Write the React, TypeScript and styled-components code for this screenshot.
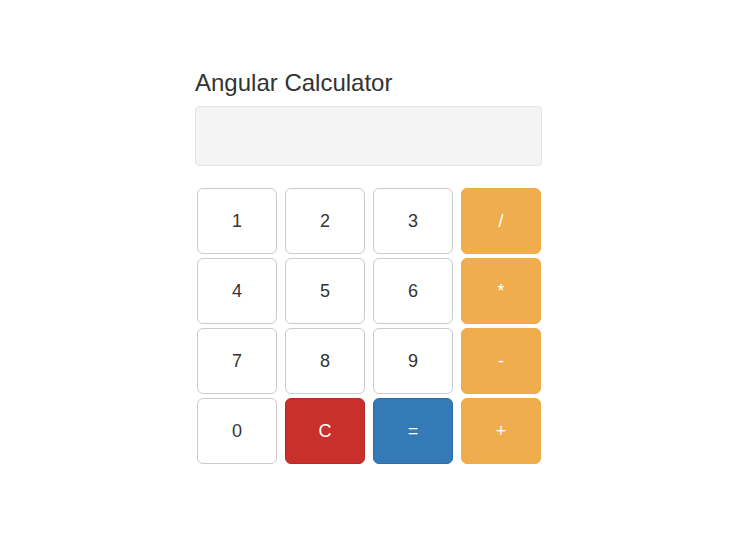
import React from "react";
import styled, { createGlobalStyle } from "styled-components";

const Global = createGlobalStyle`
  html, body { margin: 0; padding: 0; background: #fff; }
  body { font-family: "Liberation Sans", Arial, sans-serif; color: #333; }
`;

const Page = styled.div`
  padding: 70px 0 0 195px;
`;

const Calculator = styled.div`
  width: 347px;
  display: flex;
  flex-direction: column;
`;

const Title = styled.h3`
  margin: 0 0 10px;
  font-size: 24px;
  font-weight: 500;
  line-height: 1.1;
  color: #333;
`;

const Display = styled.div`
  height: 60px;
  box-sizing: border-box;
  border: 1px solid #e3e3e3;
  border-radius: 4px;
  background: #f4f4f4;
`;

const Keypad = styled.div`
  margin-top: 22px;
  padding: 0 1px 0 2px;
  display: grid;
  grid-template-columns: repeat(4, 80px);
  grid-auto-rows: 66px;
  column-gap: 8px;
  row-gap: 4px;
`;

type Variant = "default" | "warning" | "danger" | "primary";

const palette: Record<Variant, { bg: string; border: string; color: string }> = {
  default: { bg: "#fff", border: "#ccc", color: "#333" },
  warning: { bg: "#f0ad4e", border: "#efa945", color: "#fff" },
  danger: { bg: "#c9302c", border: "#b52b27", color: "#fff" },
  primary: { bg: "#337ab7", border: "#2e6da4", color: "#fff" },
};

const Key = styled.button<{ $variant: Variant }>`
  box-sizing: border-box;
  margin: 0;
  padding: 0;
  border: 1px solid ${(p) => palette[p.$variant].border};
  border-radius: 6px;
  background: ${(p) => palette[p.$variant].bg};
  color: ${(p) => palette[p.$variant].color};
  font-family: "Liberation Sans", Arial, sans-serif;
  font-size: 18px;
  line-height: 1;
  display: flex;
  align-items: center;
  justify-content: center;
  cursor: pointer;
`;

const keys: { label: string; variant: Variant }[] = [
  { label: "1", variant: "default" },
  { label: "2", variant: "default" },
  { label: "3", variant: "default" },
  { label: "/", variant: "warning" },
  { label: "4", variant: "default" },
  { label: "5", variant: "default" },
  { label: "6", variant: "default" },
  { label: "*", variant: "warning" },
  { label: "7", variant: "default" },
  { label: "8", variant: "default" },
  { label: "9", variant: "default" },
  { label: "-", variant: "warning" },
  { label: "0", variant: "default" },
  { label: "C", variant: "danger" },
  { label: "=", variant: "primary" },
  { label: "+", variant: "warning" },
];

export default function App() {
  return (
    <>
      <Global />
      <Page>
        <Calculator>
          <Title>Angular Calculator</Title>
          <Display />
          <Keypad>
            {keys.map((k) => (
              <Key key={k.label} $variant={k.variant}>
                {k.label}
              </Key>
            ))}
          </Keypad>
        </Calculator>
      </Page>
    </>
  );
}
